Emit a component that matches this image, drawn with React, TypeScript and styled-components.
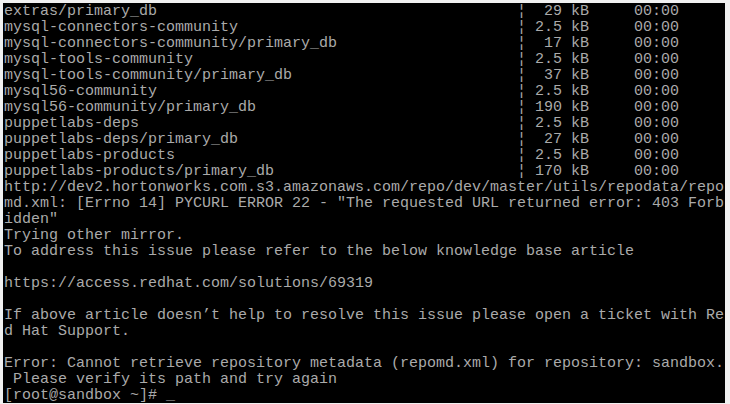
import React from "react";
import styled, { createGlobalStyle } from "styled-components";

const Global = createGlobalStyle`
  html, body {
    margin: 0;
    padding: 0;
    background: #f0f0f0;
    width: 730px;
    height: 404px;
    overflow: hidden;
  }
`;

const Frame = styled.div`
  display: flex;
  padding: 3px 5px 1px 3px;
  width: 730px;
  height: 404px;
  box-sizing: border-box;
`;

const Screen = styled.div`
  width: 722px;
  height: 400px;
  box-sizing: border-box;
  padding: 1px 0 0 1px;
  background: #000000;
  display: flex;
  flex-direction: column;
  overflow: hidden;
`;

const Line = styled.div`
  flex: 0 0 16px;
  height: 16px;
  line-height: 16px;
  font-family: "Liberation Mono", "DejaVu Sans Mono", monospace;
  font-size: 15px;
  color: #aaaaaa;
  white-space: pre;
  overflow: hidden;
`;

type Repo = { name: string; size: string };

const repos: Repo[] = [
  { name: "extras/primary_db", size: "29" },
  { name: "mysql-connectors-community", size: "2.5" },
  { name: "mysql-connectors-community/primary_db", size: "17" },
  { name: "mysql-tools-community", size: "2.5" },
  { name: "mysql-tools-community/primary_db", size: "37" },
  { name: "mysql56-community", size: "2.5" },
  { name: "mysql56-community/primary_db", size: "190" },
  { name: "puppetlabs-deps", size: "2.5" },
  { name: "puppetlabs-deps/primary_db", size: "27" },
  { name: "puppetlabs-products", size: "2.5" },
  { name: "puppetlabs-products/primary_db", size: "170" },
];

const repoLine = (r: Repo) =>
  r.name.padEnd(57, " ") + "\u00a6 " + r.size.padStart(3, " ") + " kB     00:00";

const rest = [
  "http://dev2.hortonworks.com.s3.amazonaws.com/repo/dev/master/utils/repodata/repo",
  'md.xml: [Errno 14] PYCURL ERROR 22 - "The requested URL returned error: 403 Forb',
  'idden"',
  "Trying other mirror.",
  "To address this issue please refer to the below knowledge base article",
  "",
  "https://access.redhat.com/solutions/69319",
  "",
  "If above article doesn\u2019t help to resolve this issue please open a ticket with Re",
  "d Hat Support.",
  "",
  "Error: Cannot retrieve repository metadata (repomd.xml) for repository: sandbox.",
  " Please verify its path and try again",
  "[root@sandbox ~]# _",
];

export default function App() {
  const lines = [...repos.map(repoLine), ...rest];
  return (
    <>
      <Global />
      <Frame>
        <Screen>
          {lines.map((l, i) => (
            <Line key={i}>{l === "" ? " " : l}</Line>
          ))}
        </Screen>
      </Frame>
    </>
  );
}
